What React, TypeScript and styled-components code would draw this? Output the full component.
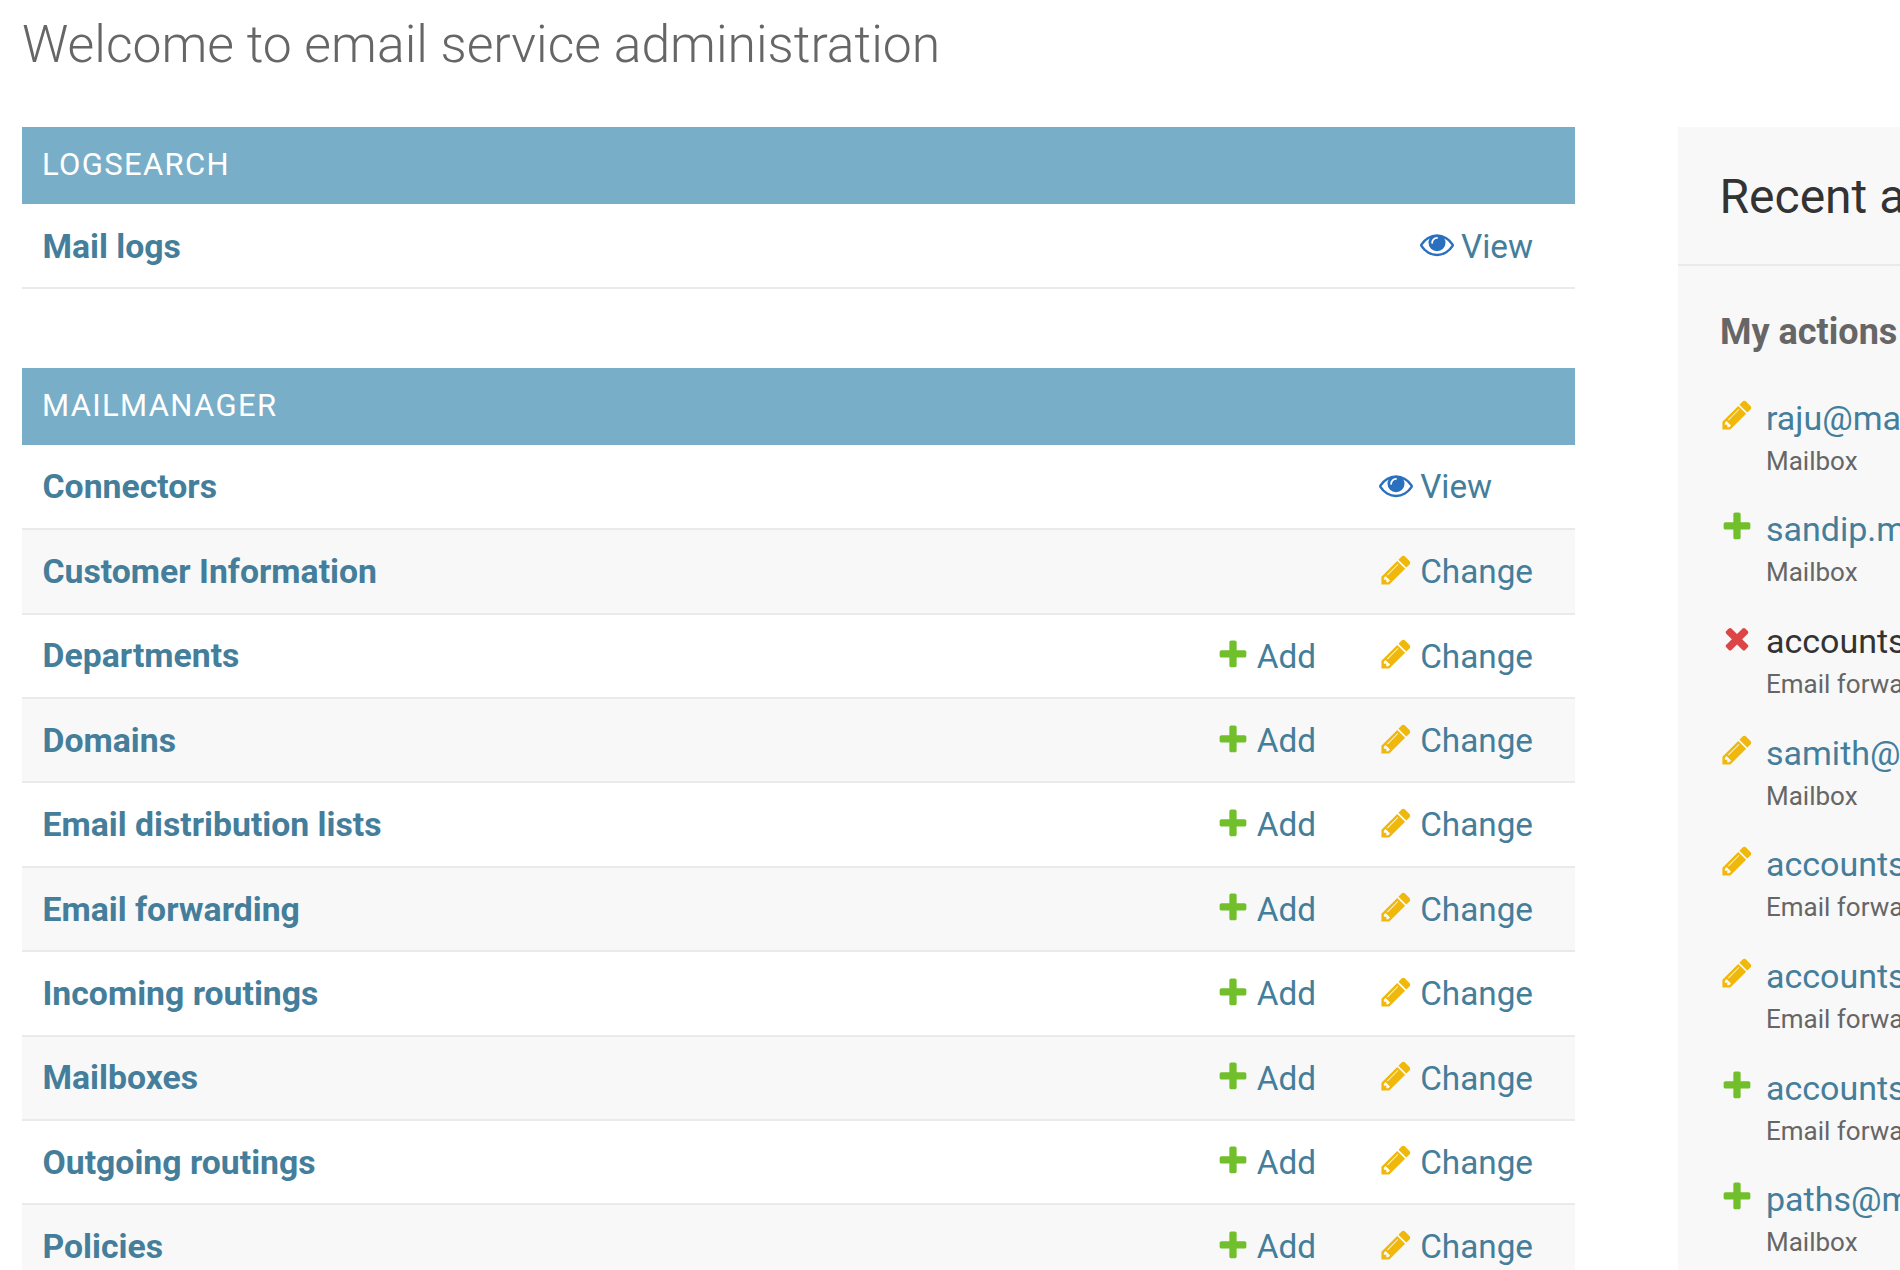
import React from "react";
import styled, { createGlobalStyle } from "styled-components";

const Global = createGlobalStyle`
  html, body { margin: 0; padding: 0; background: #fff; height: 1270px; overflow: hidden; }
  body { font-family: Roboto, "Liberation Sans", sans-serif; color: #333; }
`;

const Page = styled.div`
  width: 1900px;
  height: 1270px;
  overflow: hidden;
  box-sizing: border-box;
  padding: 13px 0 0 22px;
`;
const Title = styled.h1`
  margin: 0 0 50px;
  font-size: 51.7px;
  line-height: 64px;
  font-weight: 300;
  color: #666;
`;
const Columns = styled.div`
  display: flex;
  align-items: flex-start;
  gap: 103px;
  width: 2300px;
`;
const Main = styled.div`
  width: 1553px;
  flex: none;
`;
const Module = styled.div`
  margin-bottom: 79px;
`;
const Caption = styled.div<{ $tall?: boolean }>`
  background: #79aec8;
  color: #fff;
  font-size: 31px;
  line-height: 75px;
  height: ${(p) => (p.$tall ? "77px" : "76.5px")};
  padding-left: 20px;
  letter-spacing: 1.35px;
  text-transform: uppercase;
`;
const Table = styled.table`
  width: 100%;
  border-collapse: collapse;
`;
const Row = styled.tr<{ $alt?: boolean; $low?: boolean }>`
  height: 84.4px;
  background: ${(p) => (p.$alt ? "#f8f8f8" : "#fff")};
  border-bottom: 2px solid #eaeaea;
  & > th,
  & > td {
    padding-top: ${(p) => (p.$low ? "2px" : "0")};
  }
`;
const Name = styled.th`
  text-align: left;
  font-size: 33.75px;
  font-weight: 700;
  padding: 0 0 0 20.5px;
  color: #447e9b;
`;
const Action = styled.td<{ $wide?: boolean }>`
  white-space: nowrap;
  font-size: 33.3px;
  padding: 0 ${(p) => (p.$wide ? "63px" : "42px")} 0 0;
  color: #447e9b;
  width: 1px;
`;
const ActionLink = styled.span`
  display: inline-flex;
  align-items: center;
  gap: 7px;
  position: relative;
  top: 2px;
`;
const IconSvg = styled.svg`
  width: 34px;
  height: 34px;
  flex: none;
`;
const LinkIcon = styled(IconSvg)`
  margin-top: -4px;
`;
const Side = styled.aside`
  width: 600px;
  flex: none;
  background: #f8f8f8;
  height: 1200px;
`;
const SideHead = styled.h2`
  margin: 0;
  height: 139px;
  box-sizing: border-box;
  padding: 2px 0 0 41.5px;
  font-size: 48px;
  line-height: 136px;
  font-weight: 400;
  color: #333;
  border-bottom: 2px solid #eaeaea;
`;
const SideBody = styled.div`
  padding: 36px 42px 0;
`;
const SideTitle = styled.h3`
  margin: 0 0 32.5px;
  font-size: 36px;
  line-height: 60px;
  font-weight: 700;
  color: #666;
`;
const ActionList = styled.ul`
  list-style: none;
  margin: 0;
  padding: 0;
  display: flex;
  flex-direction: column;
  gap: 25.7px;
`;
const ActionItem = styled.li`
  display: grid;
  grid-template-columns: 34px 1fr;
  column-gap: 12px;
`;
const ItemIcon = styled(IconSvg)`
  margin-top: 3px;
`;
const ItemText = styled.div`
  display: flex;
  flex-direction: column;
`;
const ItemLink = styled.span<{ $deleted?: boolean }>`
  font-size: 34px;
  line-height: 46px;
  color: ${(p) => (p.$deleted ? "#333" : "#447e9b")};
  white-space: nowrap;
`;
const ItemType = styled.span`
  font-size: 26px;
  line-height: 40px;
  color: #666;
`;

const ICONS = {
  add: {
    fill: "#70bf2b",
    d: "M1600 796v192q0 40-28 68t-68 28h-416v416q0 40-28 68t-68 28h-192q-40 0-68-28t-28-68v-416h-416q-40 0-68-28t-28-68v-192q0-40 28-68t68-28h416v-416q0-40 28-68t68-28h192q40 0 68 28t28 68v416h416q40 0 68 28t28 68z",
  },
  change: {
    fill: "#efb80b",
    d: "M491 1536l91-91-235-235-91 91v107h128v128h107zm523-928q0-22-22-22-10 0-17 7l-542 542q-7 7-7 17 0 22 22 22 10 0 17-7l542-542q7-7 7-17zm-54-192l416 416-832 832h-416v-416zm683 96q0 53-37 90l-166 166-416-416 166-165q36-38 90-38 53 0 91 38l235 234q37 39 37 91z",
  },
  del: {
    fill: "#dd4646",
    d: "M1490 1322q0 40-28 68l-136 136q-28 28-68 28t-68-28l-294-294-294 294q-28 28-68 28t-68-28l-136-136q-28-28-28-68t28-68l294-294-294-294q-28-28-28-68t28-68l136-136q28-28 68-28t68 28l294 294 294-294q28-28 68-28t68 28l136 136q28 28 28 68t-28 68l-294 294 294 294q28 28 28 68z",
  },
  view: {
    fill: "#2b70bf",
    d: "M1664 960q-152-236-381-353 61 104 61 225 0 185-131.5 316.5t-316.5 131.5-316.5-131.5-131.5-316.5q0-121 61-225-229 117-381 353 133 205 333.5 326.5t434.5 121.5 434.5-121.5 333.5-326.5zm-720-384q0-20-14-34t-34-14q-125 0-214.5 89.5t-89.5 214.5q0 20 14 34t34 14 34-14 14-34q0-86 61-147t147-61q20 0 34-14t14-34zm848 384q0 34-20 69-140 230-376.5 368.5t-499.5 138.5-499.5-139-376.5-368q-20-35-20-69t20-69q140-229 376.5-368t499.5-139 499.5 139 376.5 368q20 35 20 69z",
  },
};
type IconName = keyof typeof ICONS;

const Icon = ({ name, as }: { name: IconName; as?: typeof IconSvg }) => {
  const C = (as ?? IconSvg) as typeof IconSvg;
  return (
    <C viewBox="0 0 1792 1792" aria-hidden="true">
      <path fill={ICONS[name].fill} d={ICONS[name].d} />
    </C>
  );
};

const Link = ({ name, label }: { name: IconName; label: string }) => (
  <ActionLink>
    <Icon name={name} as={LinkIcon} />
    {label}
  </ActionLink>
);

const mail: [string, boolean, boolean][] = [
  ["Connectors", false, false],
  ["Customer Information", false, true],
  ["Departments", true, true],
  ["Domains", true, true],
  ["Email distribution lists", true, true],
  ["Email forwarding", true, true],
  ["Incoming routings", true, true],
  ["Mailboxes", true, true],
  ["Outgoing routings", true, true],
  ["Policies", true, true],
];

const recent: { icon: IconName; text: string; type: string }[] = [
  { icon: "change", text: "raju@mailservice.example", type: "Mailbox" },
  { icon: "add", text: "sandip.m@mailservice.example", type: "Mailbox" },
  { icon: "del", text: "accounts@mailservice.example", type: "Email forwarding" },
  { icon: "change", text: "samith@mailservice.example", type: "Mailbox" },
  { icon: "change", text: "accounts@mailservice.example", type: "Email forwarding" },
  { icon: "change", text: "accounts@mailservice.example", type: "Email forwarding" },
  { icon: "add", text: "accounts@mailservice.example", type: "Email forwarding" },
  { icon: "add", text: "paths@mailservice.example", type: "Mailbox" },
];

export default function App() {
  return (
    <Page>
      <Global />
      <Title>Welcome to email service administration</Title>
      <Columns>
        <Main>
          <Module>
            <Caption>Logsearch</Caption>
            <Table>
              <tbody>
                <Row $low>
                  <Name>Mail logs</Name>
                  <Action />
                  <Action>
                    <Link name="view" label="View" />
                  </Action>
                </Row>
              </tbody>
            </Table>
          </Module>
          <Module>
            <Caption $tall>Mailmanager</Caption>
            <Table>
              <tbody>
                {mail.map(([n, add, change], i) => (
                  <Row key={n} $alt={i % 2 === 1}>
                    <Name>{n}</Name>
                    <Action $wide>{add && <Link name="add" label="Add" />}</Action>
                    <Action>
                      {change ? <Link name="change" label="Change" /> : <Link name="view" label="View" />}
                    </Action>
                  </Row>
                ))}
              </tbody>
            </Table>
          </Module>
        </Main>
        <Side>
          <SideHead>Recent actions</SideHead>
          <SideBody>
            <SideTitle>My actions</SideTitle>
            <ActionList>
              {recent.map((r, i) => (
                <ActionItem key={i}>
                  <Icon name={r.icon} as={ItemIcon} />
                  <ItemText>
                    <ItemLink $deleted={r.icon === "del"}>{r.text}</ItemLink>
                    <ItemType>{r.type}</ItemType>
                  </ItemText>
                </ActionItem>
              ))}
            </ActionList>
          </SideBody>
        </Side>
      </Columns>
    </Page>
  );
}
